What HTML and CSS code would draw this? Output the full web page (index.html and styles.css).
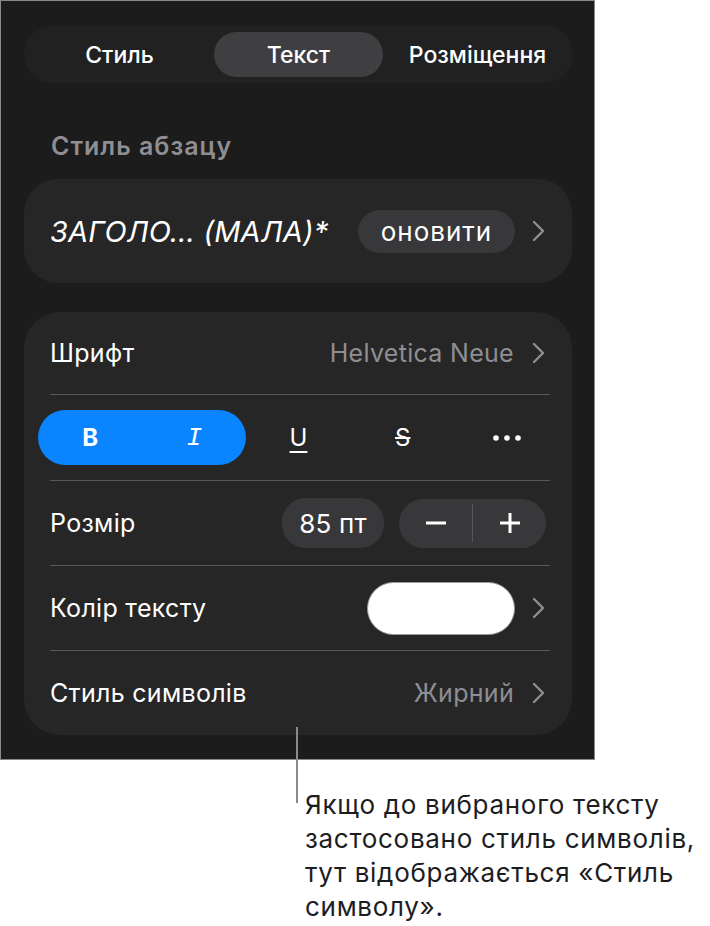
FILE: index.html
```html
<!DOCTYPE html>
<html lang="uk">
<head>
  <meta charset="UTF-8">
  <meta name="viewport" content="width=device-width, initial-scale=1.0">
  <title>Формат тексту</title>
  <link rel="stylesheet" href="styles.css">
</head>
<body>
  <div class="panel">
    <div class="segmented">
      <button class="seg">Стиль</button>
      <button class="seg active">Текст</button>
      <button class="seg">Розміщення</button>
    </div>

    <h2 class="section-title">Стиль абзацу</h2>

    <div class="card style-card">
      <span class="style-name">ЗАГОЛО… (МАЛА)*</span>
      <button class="pill update-btn">оновити</button>
      <svg class="chevron" viewBox="0 0 13 22"><polyline points="2,2 11,11 2,20"/></svg>
    </div>

    <div class="card options">
      <div class="row row-first">
        <span class="label">Шрифт</span>
        <span class="value">Helvetica Neue</span>
        <svg class="chevron" viewBox="0 0 13 22"><polyline points="2,2 11,11 2,20"/></svg>
      </div>
      <div class="divider"></div>

      <div class="format-row">
        <div class="format-group">
          <button class="fmt fmt-bold">B</button>
          <button class="fmt fmt-italic">I</button>
        </div>
        <button class="fmt fmt-underline">U</button>
        <button class="fmt fmt-strike">S</button>
        <button class="fmt fmt-more">
          <svg viewBox="0 0 28 6" width="28" height="6">
            <circle cx="3" cy="3" r="2.8"/>
            <circle cx="14" cy="3" r="2.8"/>
            <circle cx="25" cy="3" r="2.8"/>
          </svg>
        </button>
      </div>
      <div class="divider"></div>

      <div class="row">
        <span class="label">Розмір</span>
        <span class="pill size-value">85 пт</span>
        <div class="stepper">
          <button class="step">
            <svg viewBox="0 0 20 20" width="20" height="20"><line x1="0" y1="10" x2="20" y2="10"/></svg>
          </button>
          <span class="step-sep"></span>
          <button class="step">
            <svg viewBox="0 0 20 20" width="20" height="20"><line x1="0" y1="10" x2="20" y2="10"/><line x1="10" y1="0" x2="10" y2="20"/></svg>
          </button>
        </div>
      </div>
      <div class="divider"></div>

      <div class="row">
        <span class="label">Колір тексту</span>
        <span class="swatch"></span>
        <svg class="chevron" viewBox="0 0 13 22"><polyline points="2,2 11,11 2,20"/></svg>
      </div>
      <div class="divider"></div>

      <div class="row">
        <span class="label">Стиль символів</span>
        <span class="value">Жирний</span>
        <svg class="chevron" viewBox="0 0 13 22"><polyline points="2,2 11,11 2,20"/></svg>
      </div>
    </div>
  </div>

  <p class="callout">Якщо до вибраного тексту застосовано стиль символів, тут відображається «Стиль символу».</p>
</body>
</html>
```

FILE: styles.css
```css
:root {
  --panel-bg: #1c1c1c;
  --card-bg: #262626;
  --pill-bg: #38383a;
  --seg-bg: #212121;
  --seg-active: #3f3f41;
  --divider: #585858;
  --text: #ffffff;
  --muted: #8e8e93;
  --accent: #0a84ff;
}

* {
  margin: 0;
  padding: 0;
  box-sizing: border-box;
}

body {
  background: #ffffff;
  font-family: Inter, Roboto, "Noto Sans", sans-serif;
}

button {
  font: inherit;
  color: inherit;
  background: none;
  border: none;
}

.panel {
  width: 595px;
  height: 760px;
  background: var(--panel-bg);
  border: 1px solid #8a8a8a;
  padding: 25px 23px 0 23px;
  color: var(--text);
}

/* top tabs */
.segmented {
  display: grid;
  grid-template-columns: 1fr 1fr 1fr;
  height: 57px;
  padding: 6px;
  background: var(--seg-bg);
  border-radius: 29px;
  width: 549px;
}

.seg {
  font-size: 23px;
  font-weight: 500;
  border-radius: 24px;
}

.seg.active {
  background: var(--seg-active);
  margin: 0 5px;
}

.section-title {
  font-size: 25px;
  font-weight: 600;
  letter-spacing: 1px;
  color: var(--muted);
  line-height: 28px;
  margin: 49px 0 19px 27px;
}

.card {
  background: var(--card-bg);
  width: 548px;
}

.style-card {
  height: 104px;
  border-radius: 34px;
  display: flex;
  align-items: center;
  padding: 0 27px 0 26px;
}

.style-name {
  font-size: 29px;
  font-style: italic;
  flex: 1;
  letter-spacing: 0.2px;
  white-space: nowrap;
}

.pill {
  background: var(--pill-bg);
  border-radius: 24px;
}

.update-btn {
  font-size: 26px;
  font-weight: 400;
  letter-spacing: 1px;
  height: 43px;
  width: 157px;
  margin-right: 17px;
  flex-shrink: 0;
}

.chevron {
  width: 13px;
  height: 22px;
  flex-shrink: 0;
  fill: none;
  stroke: var(--muted);
  stroke-width: 2.4;
  stroke-linecap: round;
  stroke-linejoin: round;
}

.options {
  margin-top: 29px;
  height: 423px;
  border-radius: 36px;
}

.row {
  display: flex;
  align-items: center;
  height: 84px;
  padding: 0 27px 0 26px;
  font-size: 25px;
  letter-spacing: 0.3px;
}

.row-first {
  height: 82px;
}

.label {
  flex: 1;
}

.value {
  color: var(--muted);
  margin-right: 18px;
}

.divider {
  height: 1px;
  background: var(--divider);
  margin: 0 22px 0 26px;
}

/* bold / italic / underline / strike / more */
.format-row {
  display: grid;
  grid-template-columns: repeat(5, 1fr);
  align-items: center;
  height: 85px;
  padding: 0 13px 0 14px;
}

.format-group {
  grid-column: span 2;
  display: grid;
  grid-template-columns: 1fr 1fr;
  height: 55px;
  background: var(--accent);
  border-radius: 28px;
}

.fmt {
  font-size: 24px;
  height: 55px;
  display: flex;
  align-items: center;
  justify-content: center;
}

.fmt-bold {
  font-weight: 700;
}

.fmt-italic {
  font-family: "Liberation Mono", monospace;
  font-style: italic;
  font-size: 26px;
}

.fmt-underline {
  text-decoration: underline;
  text-decoration-thickness: 2px;
  text-underline-offset: 5px;
}

.fmt-strike {
  text-decoration: line-through;
  text-decoration-thickness: 2px;
}

.fmt-more svg {
  fill: #ffffff;
}

.size-value {
  font-size: 26px;
  letter-spacing: 0.2px;
  height: 50px;
  width: 102px;
  display: flex;
  align-items: center;
  justify-content: center;
  margin-right: 15px;
}

.stepper {
  display: flex;
  align-items: center;
  width: 147px;
  height: 49px;
  background: var(--pill-bg);
  border-radius: 25px;
  margin-right: -1px;
}

.step {
  flex: 1;
  height: 100%;
  display: flex;
  align-items: center;
  justify-content: center;
}

.step svg {
  stroke: #ffffff;
  stroke-width: 3;
}

.step-sep {
  width: 1px;
  height: 38px;
  background: #565658;
}

.swatch {
  width: 148px;
  height: 53px;
  background: #ffffff;
  border: 1.5px solid #9a9a9a;
  border-radius: 27px;
  margin-right: 17px;
}

/* caption under the panel */
.callout {
  position: relative;
  margin: 28px 0 0 305px;
  font-size: 26px;
  letter-spacing: 0.7px;
  line-height: 34px;
  color: #1d1d1f;
  width: 404px;
}

.callout::before {
  content: "";
  position: absolute;
  left: -9px;
  top: -61px;
  width: 2px;
  height: 76px;
  background: #8a8a8a;
}
```
